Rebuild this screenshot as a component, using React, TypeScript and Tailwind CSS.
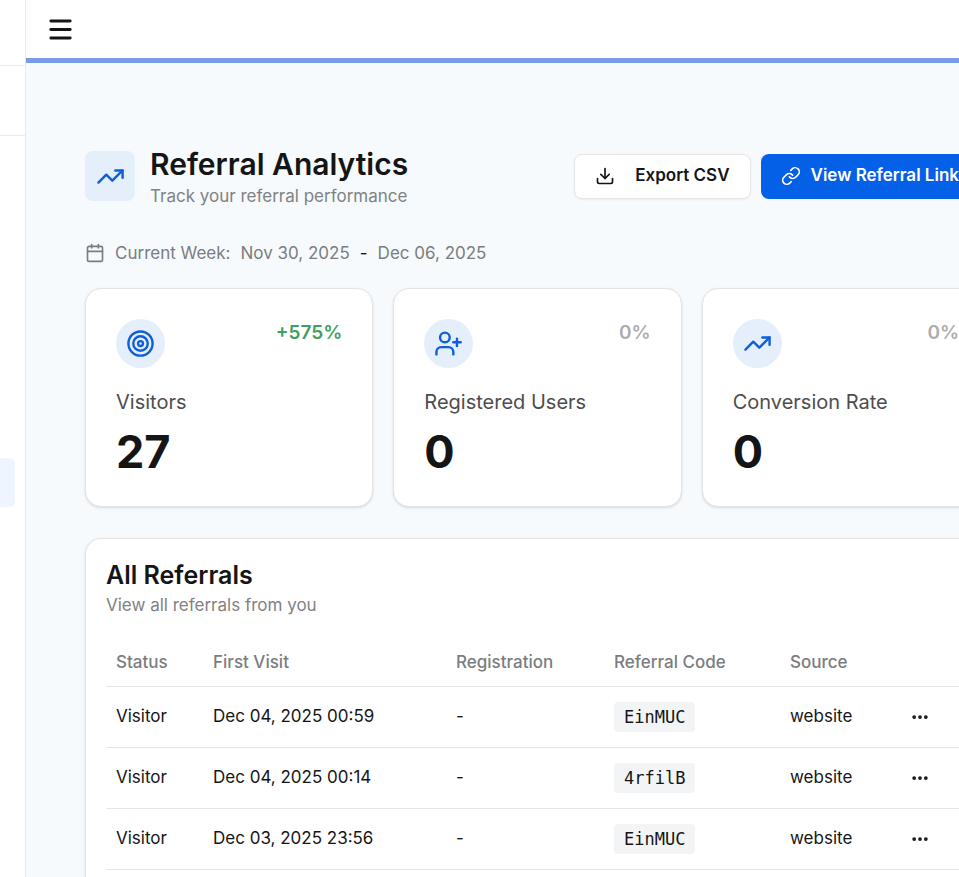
import { Calendar, Download, Ellipsis, Link, Menu, Target, TrendingUp, UserPlus, type LucideIcon } from 'lucide-react';

interface Stat {
  label: string;
  value: string;
  change: string;
  up: boolean;
  icon: LucideIcon;
}

interface Referral {
  status: string;
  firstVisit: string;
  registration: string;
  code: string;
  source: string;
}

const stats: Stat[] = [
  { label: 'Visitors', value: '27', change: '+575%', up: true, icon: Target },
  { label: 'Registered Users', value: '0', change: '0%', up: false, icon: UserPlus },
  { label: 'Conversion Rate', value: '0', change: '0%', up: false, icon: TrendingUp },
];

const referrals: Referral[] = [
  { status: 'Visitor', firstVisit: 'Dec 04, 2025 00:59', registration: '-', code: 'EinMUC', source: 'website' },
  { status: 'Visitor', firstVisit: 'Dec 04, 2025 00:14', registration: '-', code: '4rfilB', source: 'website' },
  { status: 'Visitor', firstVisit: 'Dec 03, 2025 23:56', registration: '-', code: 'EinMUC', source: 'website' },
];

function StatCard({ stat }: { stat: Stat }) {
  const Icon = stat.icon;
  return (
    <div className="rounded-2xl border border-[#e2e4e7] bg-white p-[30px] shadow-sm">
      <div className="flex items-start justify-between">
        <span className="flex size-[49px] items-center justify-center rounded-full bg-[#e5effc] text-[#0f5fdc]">
          <Icon size={29} />
        </span>
        <span className={`text-[19px] leading-7 font-semibold ${stat.up ? 'text-[#3fa061]' : 'text-[#adadad]'}`}>
          {stat.change}
        </span>
      </div>
      <p className="mt-5 text-xl leading-7 text-[#4d4d4f]">{stat.label}</p>
      <p className="mt-3 text-[45px] leading-[48px] font-bold">{stat.value}</p>
    </div>
  );
}

export default function App() {
  return (
    <div className="flex min-h-screen overflow-x-clip bg-[#f6fafc] font-['Inter','Liberation_Sans',sans-serif] text-[#151516]">
      <aside className="w-[26px] shrink-0 overflow-hidden border-r border-[#e8eaed] bg-white">
        <div className="h-[66px] border-b border-[#e8eaed]" />
        <div className="h-[70px] border-b border-[#e8eaed]" />
        <div className="mt-[322px] mr-[10px] h-[49px] rounded-r-md bg-[#eef5fe]" />
      </aside>

      <div className="flex min-w-0 flex-1 flex-col">
        <header className="flex h-[63px] items-center border-b-[5px] border-[#779bea] bg-white px-5">
          <button aria-label="Toggle menu">
            <Menu size={29} strokeWidth={2.4} />
          </button>
        </header>

        <main className="-mr-[31px] flex flex-1 flex-col pt-[81px] pl-[59px]">
          <div className="flex items-center justify-between">
            <div className="flex items-center gap-[15px]">
              <span className="flex size-[50px] items-center justify-center rounded-lg bg-[#e5effc] text-[#0f5fdc]">
                <TrendingUp size={29} />
              </span>
              <div>
                <h1 className="text-3xl leading-10 font-semibold">Referral Analytics</h1>
                <p className="text-[17px] leading-6 text-[#808284]">Track your referral performance</p>
              </div>
            </div>
            <div className="mr-[11px] flex gap-[10px] text-[17px] font-semibold whitespace-nowrap">
              <button className="flex h-[45px] items-center gap-5 rounded-lg border border-[#e4e6e9] bg-white px-5 shadow-xs">
                <Download size={20} />
                Export CSV
              </button>
              <button className="flex h-[45px] items-center gap-[10px] rounded-lg bg-[#0560e8] px-5 text-white">
                <Link size={20} />
                View Referral Link
              </button>
            </div>
          </div>

          <div className="mt-[31px] flex items-center gap-[10px] text-[17px] leading-7 text-[#7b7d7f]">
            <Calendar size={20} />
            <span>Current Week:</span>
            <span>Nov 30, 2025</span>
            <span className="text-[#151516]">-</span>
            <span>Dec 06, 2025</span>
          </div>

          <div className="mt-[21px] grid grid-cols-3 gap-5">
            {stats.map((s) => (
              <StatCard key={s.label} stat={s} />
            ))}
          </div>

          <section className="mt-[31px] flex-1 rounded-t-2xl border border-b-0 border-[#e2e4e7] bg-white px-5 pt-5 pb-10 shadow-sm">
            <h2 className="text-[25px] leading-8 font-semibold">All Referrals</h2>
            <p className="text-[17px] leading-7 text-[#808284]">View all referrals from you</p>
            <table className="mt-5 w-full text-[17px]">
              <thead>
                <tr className="h-[47px] border-b border-[#e4e6e9] text-left text-[#7b7d7f]">
                  <th className="w-[97px] px-[10px] font-medium">Status</th>
                  <th className="w-[243px] px-[10px] font-medium">First Visit</th>
                  <th className="w-[158px] px-[10px] font-medium">Registration</th>
                  <th className="w-[176px] px-[10px] font-medium">Referral Code</th>
                  <th className="w-[120px] px-[10px] font-medium">Source</th>
                  <th />
                </tr>
              </thead>
              <tbody>
                {referrals.map((r) => (
                  <tr key={r.firstVisit} className="h-[61px] border-b border-[#e4e6e9]">
                    <td className="px-[10px]">{r.status}</td>
                    <td className="px-[10px]">{r.firstVisit}</td>
                    <td className="px-[10px]">{r.registration}</td>
                    <td className="px-[10px]">
                      <code className="inline-block rounded-sm bg-[#f2f4f6] px-[10px] font-['DejaVu_Sans_Mono',monospace] leading-[30px]">
                        {r.code}
                      </code>
                    </td>
                    <td className="px-[10px]">{r.source}</td>
                    <td className="px-[10px]">
                      <button aria-label="Row actions" className="flex items-center">
                        <Ellipsis size={20} strokeWidth={2.5} />
                      </button>
                    </td>
                  </tr>
                ))}
              </tbody>
            </table>
          </section>
        </main>
      </div>
    </div>
  );
}
